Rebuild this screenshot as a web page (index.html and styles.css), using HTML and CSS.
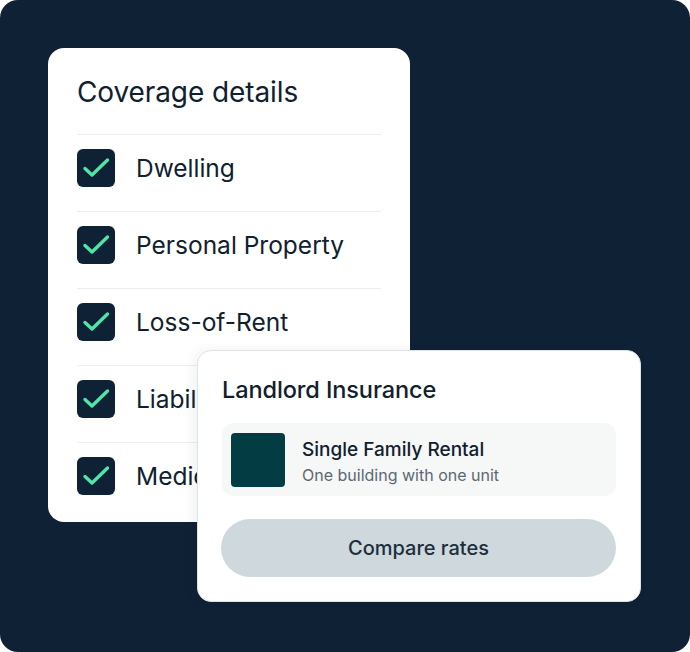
FILE: index.html
```html
<!DOCTYPE html>
<html>
<head>
<meta charset="utf-8">
<link rel="stylesheet" href="styles.css">
</head>
<body>
<div class="stage">
  <div class="coverage">
    <h2 class="coverage-title">Coverage details</h2>
    <div class="row"><span class="check"><svg viewBox="0 0 38 38" width="38" height="38"><path d="M8 19.5 L15 26 L30.5 11" fill="none" stroke="#52e3a7" stroke-width="3.4" stroke-linecap="round" stroke-linejoin="round"/></svg></span><span class="label">Dwelling</span></div>
    <div class="row"><span class="check"><svg viewBox="0 0 38 38" width="38" height="38"><path d="M8 19.5 L15 26 L30.5 11" fill="none" stroke="#52e3a7" stroke-width="3.4" stroke-linecap="round" stroke-linejoin="round"/></svg></span><span class="label">Personal Property</span></div>
    <div class="row"><span class="check"><svg viewBox="0 0 38 38" width="38" height="38"><path d="M8 19.5 L15 26 L30.5 11" fill="none" stroke="#52e3a7" stroke-width="3.4" stroke-linecap="round" stroke-linejoin="round"/></svg></span><span class="label">Loss-of-Rent</span></div>
    <div class="row"><span class="check"><svg viewBox="0 0 38 38" width="38" height="38"><path d="M8 19.5 L15 26 L30.5 11" fill="none" stroke="#52e3a7" stroke-width="3.4" stroke-linecap="round" stroke-linejoin="round"/></svg></span><span class="label">Liability</span></div>
    <div class="row"><span class="check"><svg viewBox="0 0 38 38" width="38" height="38"><path d="M8 19.5 L15 26 L30.5 11" fill="none" stroke="#52e3a7" stroke-width="3.4" stroke-linecap="round" stroke-linejoin="round"/></svg></span><span class="label">Medical</span></div>
  </div>
  <div class="quote">
    <h3 class="quote-title">Landlord Insurance</h3>
    <div class="option">
      <span class="swatch"></span>
      <div class="option-text">
        <div class="option-name">Single Family Rental</div>
        <div class="option-desc">One building with one unit</div>
      </div>
    </div>
    <button class="compare">Compare rates</button>
  </div>
</div>
</body>
</html>
```

FILE: styles.css
```css
html, body {
  margin: 0;
  padding: 0;
  background: #ffffff;
}
body {
  font-family: Inter, "Noto Sans", sans-serif;
  color: #10202f;
}
.stage {
  position: relative;
  width: 690px;
  height: 652px;
  background: #0f2134;
  border-radius: 18px;
  overflow: hidden;
  padding: 48px 0 0 48px;
  box-sizing: border-box;
}
.coverage {
  width: 362px;
  height: 474px;
  background: #ffffff;
  border-radius: 16px;
  padding: 0 29px 0 29px;
  box-sizing: border-box;
  overflow: hidden;
}
.coverage-title {
  margin: 0;
  padding: 24px 0 22px;
  font-size: 28px;
  line-height: 40px;
  font-weight: 400;
  letter-spacing: -0.1px;
  color: #10202f;
}
.row {
  display: flex;
  align-items: center;
  gap: 21px;
  border-top: 1.5px solid #ebedef;
  padding: 14px 0 24px;
  height: 38px;
  white-space: nowrap;
}
.check {
  flex: none;
  width: 38px;
  height: 38px;
  background: #0f2134;
  border-radius: 6px;
  display: flex;
}
.check svg { display: block; }
.label {
  font-size: 24.5px;
  line-height: 32px;
  color: #10202f;
  letter-spacing: 0;
}
.quote {
  position: absolute;
  left: 197px;
  top: 350px;
  width: 444px;
  height: 252px;
  box-sizing: border-box;
  background: #ffffff;
  border: 1px solid #dfe3e6;
  border-radius: 14px;
  padding: 23px 24px 0 24px;
  box-shadow: -4px 0 12px rgba(15, 33, 52, 0.06);
}
.quote-title {
  margin: 0 0 17px;
  font-size: 23.5px;
  line-height: 32px;
  font-weight: 500;
  letter-spacing: -0.1px;
  color: #10202f;
}
.option {
  display: flex;
  align-items: center;
  gap: 17px;
  height: 73px;
  box-sizing: border-box;
  background: #f6f7f7;
  border-radius: 12px;
  padding: 0 10px 0 9px;
}
.swatch {
  flex: none;
  width: 54px;
  height: 54px;
  border-radius: 4px;
  background: #033d43;
}
.option-text {
  display: flex;
  flex-direction: column;
  gap: 1px;
  padding-top: 5px;
}
.option-name {
  font-size: 19px;
  line-height: 24px;
  font-weight: 500;
  color: #10202f;
  letter-spacing: 0;
}
.option-desc {
  font-size: 16px;
  line-height: 24px;
  color: #5b6873;
}
.compare {
  display: block;
  width: 395px;
  height: 58px;
  margin: 23px 0 0 -1px;
  border: none;
  border-radius: 29px;
  background: #cfd8dd;
  font-family: Inter, "Noto Sans", sans-serif;
  font-size: 20px;
  font-weight: 500;
  color: #1d2e3c;
  letter-spacing: 0;
}
```
